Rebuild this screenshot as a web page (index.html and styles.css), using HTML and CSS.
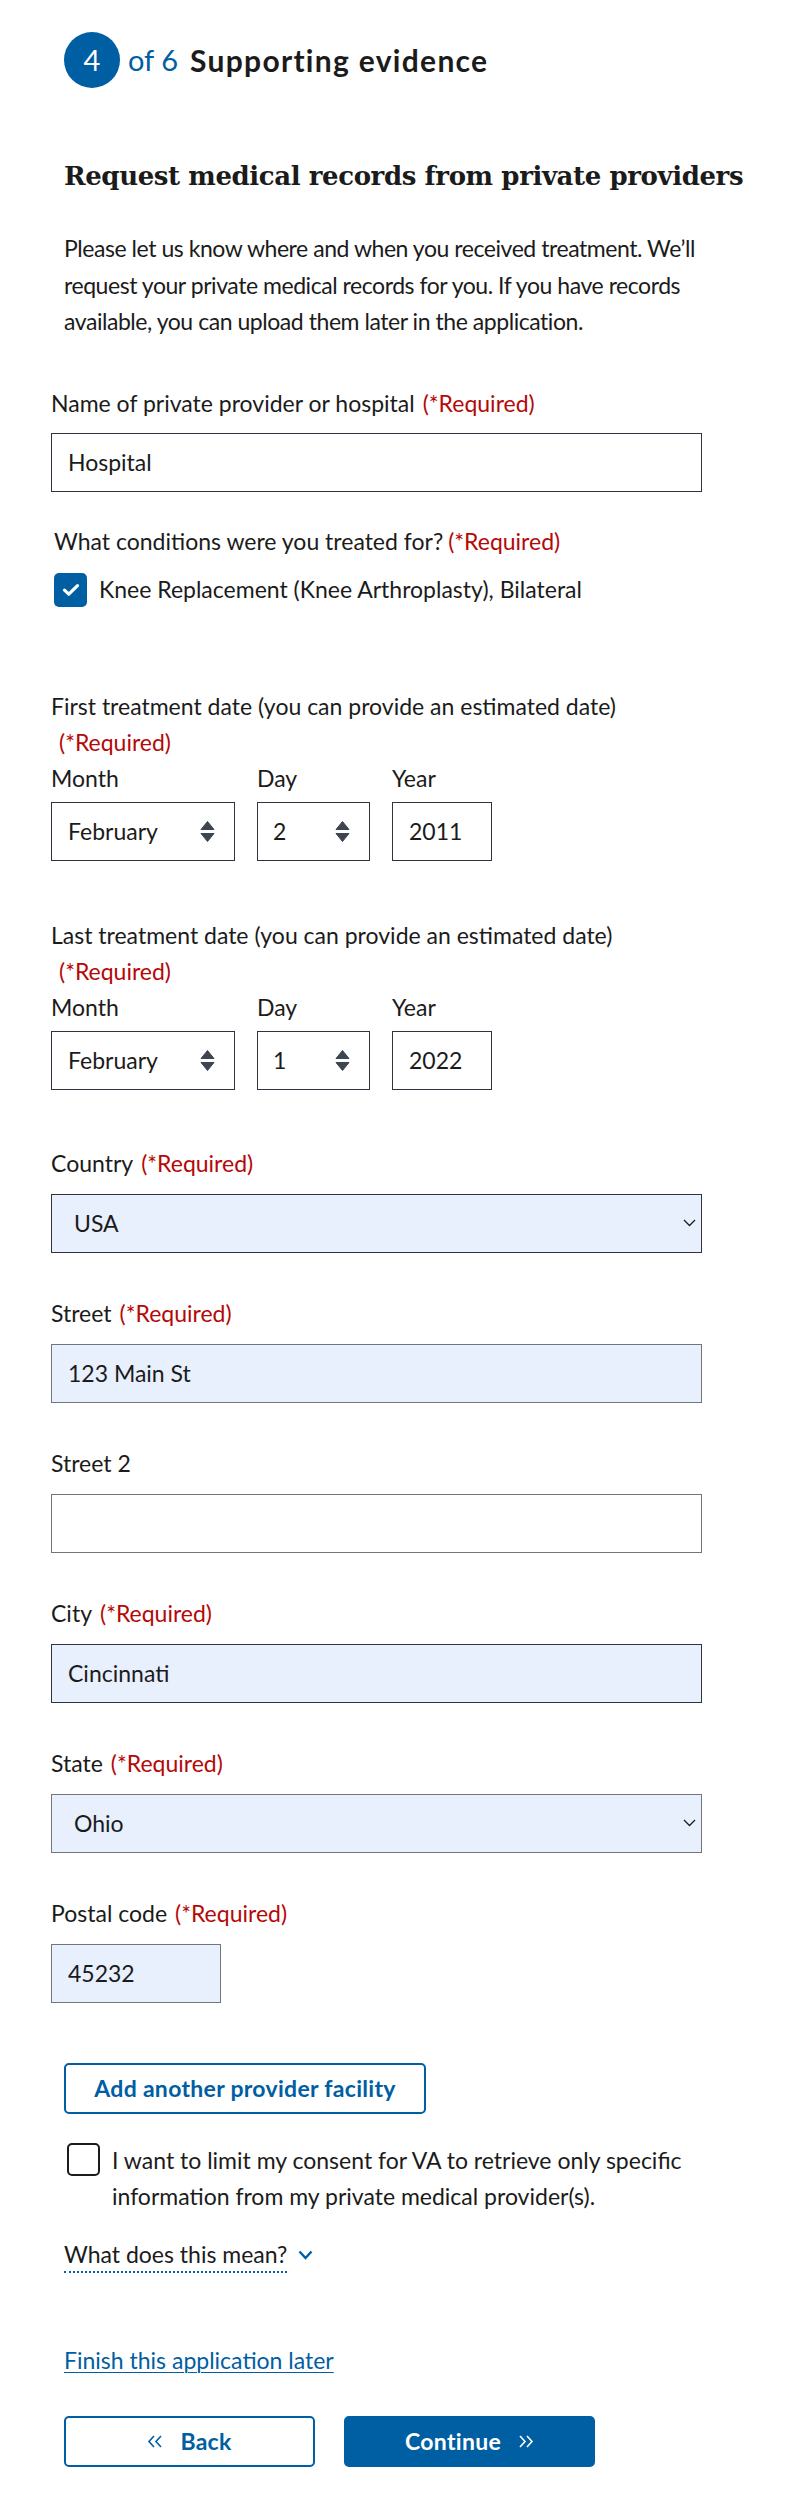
FILE: index.html
```html
<!DOCTYPE html>
<html lang="en">
<head>
<meta charset="utf-8">
<title>Supporting evidence</title>
<link rel="stylesheet" href="styles.css">
</head>
<body>
<main class="page">
  <h1 class="progress">
    <span class="step">4</span>
    <span class="of">of 6</span>
    <span class="title">Supporting evidence</span>
  </h1>

  <h2 class="section-title">Request medical records from private providers</h2>
  <p class="intro">Please let us know where and when you received treatment. We’ll request your private medical records for you. If you have records available, you can upload them later in the application.</p>

  <form class="fields">
    <div class="field field-name">
      <label class="label" for="provider">Name of private provider or hospital<span class="req">(*Required)</span></label>
      <input class="input" id="provider" type="text" value="Hospital">
    </div>

    <div class="conditions">
      <div class="label">What conditions were you treated for?<span class="req req-tight">(*Required)</span></div>
      <div class="check-row">
        <span class="checkbox checked">
          <svg width="18" height="14" viewBox="0 0 18 14"><path d="M2.5 7.2 L6.8 11.2 L15.5 2.6" fill="none" stroke="#fff" stroke-width="3.2" stroke-linecap="round" stroke-linejoin="round"/></svg>
        </span>
        <span class="check-label">Knee Replacement (Knee Arthroplasty), Bilateral</span>
      </div>
    </div>

    <div class="date-group date-first">
      <div class="label">First treatment date (you can provide an estimated date)<span class="req req-block">(*Required)</span></div>
      <div class="date-row">
        <div class="date-col col-month">
          <div class="sublabel">Month</div>
          <div class="box sel-box"><span>February</span>
            <svg class="sort" width="15" height="21" viewBox="0 0 15 21"><path d="M7.5 0.5 L14 8.5 H1 Z M7.5 20.5 L1 12.5 H14 Z" fill="#3d4551" stroke="#3d4551" stroke-width="1" stroke-linejoin="round"/></svg>
          </div>
        </div>
        <div class="date-col col-day">
          <div class="sublabel">Day</div>
          <div class="box sel-box"><span>2</span>
            <svg class="sort" width="15" height="21" viewBox="0 0 15 21"><path d="M7.5 0.5 L14 8.5 H1 Z M7.5 20.5 L1 12.5 H14 Z" fill="#3d4551" stroke="#3d4551" stroke-width="1" stroke-linejoin="round"/></svg>
          </div>
        </div>
        <div class="date-col col-year">
          <div class="sublabel">Year</div>
          <input class="box year-input" type="text" value="2011">
        </div>
      </div>
    </div>

    <div class="date-group date-last">
      <div class="label">Last treatment date (you can provide an estimated date)<span class="req req-block">(*Required)</span></div>
      <div class="date-row">
        <div class="date-col col-month">
          <div class="sublabel">Month</div>
          <div class="box sel-box"><span>February</span>
            <svg class="sort" width="15" height="21" viewBox="0 0 15 21"><path d="M7.5 0.5 L14 8.5 H1 Z M7.5 20.5 L1 12.5 H14 Z" fill="#3d4551" stroke="#3d4551" stroke-width="1" stroke-linejoin="round"/></svg>
          </div>
        </div>
        <div class="date-col col-day">
          <div class="sublabel">Day</div>
          <div class="box sel-box"><span>1</span>
            <svg class="sort" width="15" height="21" viewBox="0 0 15 21"><path d="M7.5 0.5 L14 8.5 H1 Z M7.5 20.5 L1 12.5 H14 Z" fill="#3d4551" stroke="#3d4551" stroke-width="1" stroke-linejoin="round"/></svg>
          </div>
        </div>
        <div class="date-col col-year">
          <div class="sublabel">Year</div>
          <input class="box year-input" type="text" value="2022">
        </div>
      </div>
    </div>

    <div class="field field-country">
      <div class="label">Country<span class="req">(*Required)</span></div>
      <div class="select autofill"><span>USA</span>
        <svg class="chev" width="13" height="8" viewBox="0 0 13 8"><path d="M1 1 L6.5 6.5 L12 1" fill="none" stroke="#1b1b1b" stroke-width="1.3"/></svg>
      </div>
    </div>

    <div class="field">
      <label class="label" for="street">Street<span class="req">(*Required)</span></label>
      <input class="input autofill light" id="street" type="text" value="123 Main St">
    </div>

    <div class="field">
      <label class="label" for="street2">Street 2</label>
      <input class="input light" id="street2" type="text" value="">
    </div>

    <div class="field">
      <label class="label" for="city">City<span class="req">(*Required)</span></label>
      <input class="input autofill" id="city" type="text" value="Cincinnati">
    </div>

    <div class="field">
      <div class="label">State<span class="req">(*Required)</span></div>
      <div class="select autofill light"><span>Ohio</span>
        <svg class="chev" width="13" height="8" viewBox="0 0 13 8"><path d="M1 1 L6.5 6.5 L12 1" fill="none" stroke="#1b1b1b" stroke-width="1.3"/></svg>
      </div>
    </div>

    <div class="field">
      <label class="label" for="postal">Postal code<span class="req">(*Required)</span></label>
      <input class="input autofill light postal" id="postal" type="text" value="45232">
    </div>
  </form>

  <button class="btn btn-add" type="button">Add another provider facility</button>

  <div class="consent">
    <span class="checkbox empty"></span>
    <span class="consent-label">I want to limit my consent for VA to retrieve only specific information from my private medical provider(s).</span>
  </div>

  <div class="more">
    <span class="more-text">What does this mean?</span>
    <svg class="more-chev" width="15" height="10" viewBox="0 0 15 10"><path d="M1.5 1.5 L7.5 8 L13.5 1.5" fill="none" stroke="#005ea2" stroke-width="2.4"/></svg>
  </div>

  <a class="finish" href="#">Finish this application later</a>

  <div class="nav">
    <button class="btn btn-back" type="button">
      <svg width="16" height="13" viewBox="0 0 16 13"><path d="M7 1 L2 6.5 L7 12 M14 1 L9 6.5 L14 12" fill="none" stroke="#005ea2" stroke-width="1.6"/></svg>
      <span>Back</span>
    </button>
    <button class="btn btn-continue" type="button">
      <span>Continue</span>
      <svg width="16" height="13" viewBox="0 0 16 13"><path d="M2 1 L7 6.5 L2 12 M9 1 L14 6.5 L9 12" fill="none" stroke="#fff" stroke-width="1.6"/></svg>
    </button>
  </div>
</main>
</body>
</html>
```

FILE: styles.css
```css
* { box-sizing: border-box; }

html, body {
  margin: 0;
  padding: 0;
  background: #fff;
}

body {
  font-family: "Lato", "Noto Sans", sans-serif;
  font-size: 23px;
  line-height: 36px;
  color: #1b1b1b;
}

.page {
  width: 800px;
  padding: 32px 0 0 64px;
}

/* progress header */
.progress {
  display: flex;
  align-items: center;
  height: 56px;
  margin: 0;
  font-size: 29px;
  line-height: 56px;
}

.step {
  width: 56px;
  height: 56px;
  border-radius: 50%;
  background: #005ea2;
  color: #fff;
  font-weight: 400;
  display: flex;
  align-items: center;
  justify-content: center;
}

.of {
  margin-left: 8px;
  color: #005ea2;
  font-weight: 400;
}

.title {
  margin-left: 12px;
  font-size: 30px;
  letter-spacing: 1.3px;
  font-weight: 700;
}

.section-title {
  margin: 72px 0 0;
  font-family: "DejaVu Serif", serif;
  font-weight: 700;
  font-size: 26px;
  letter-spacing: -0.4px;
  line-height: 32px;
}

.intro {
  margin: 38px 0 0;
  width: 660px;
  line-height: 36.5px;
  letter-spacing: -0.45px;
}

/* form */
.fields {
  margin: 0 0 0 -13px;
  width: 651px;
}

.label {
  display: block;
  margin: 0;
}

.req {
  display: inline-block;
  margin-left: 8px;
  color: #b50909;
}

.req-tight { margin-left: 5px; }

.req-block { display: block; }

.field { margin-top: 42px; }

.field-name { margin-top: 45px; }

.field-country { margin-top: 55px; }

.input {
  display: block;
  width: 100%;
  height: 59px;
  margin: 13px 0 0;
  padding: 0 16px;
  border: 1px solid #2f3540;
  background: #fff;
  font-family: inherit;
  font-size: 23px;
  color: #1b1b1b;
  outline: none;
}

.field-name .input { margin-top: 12px; }

.light { border-color: #71767a; }

.autofill { background: #e8f0fe; }

.postal { width: 170px; }

.select {
  display: flex;
  align-items: center;
  justify-content: space-between;
  height: 59px;
  margin-top: 13px;
  padding: 0 5px 0 22px;
  border: 1px solid #2f3540;
}

.select.light { border-color: #71767a; }

/* conditions */
.conditions {
  margin: 31px 0 0 3px;
}

.check-row {
  display: flex;
  align-items: flex-start;
  margin-top: 12px;
}

.checkbox {
  flex: none;
  width: 33px;
  height: 34px;
  border-radius: 5px;
  display: flex;
  align-items: center;
  justify-content: center;
}

.checkbox.checked {
  margin-top: 2px;
  background: #005ea2;
}

.check-label { margin-left: 12px; }

/* dates */
.date-group { margin-top: 81px; }

.date-last { margin-top: 56px; }

.date-row {
  display: flex;
  gap: 22px;
}

.sublabel { line-height: 36px; }

.col-month { width: 184px; }
.col-day { width: 113px; }
.col-year { width: 100px; }

.box {
  display: flex;
  align-items: center;
  width: 100%;
  height: 59px;
  margin-top: 6px;
  border: 1px solid #2f3540;
  background: #fff;
  font-family: inherit;
  font-size: 23px;
  color: #1b1b1b;
}

.sel-box {
  justify-content: space-between;
  padding: 0 19px 0 16px;
}

.col-day .sel-box { padding-left: 15px; }

.year-input {
  padding: 0 16px;
  outline: none;
}

/* buttons */
.btn {
  display: flex;
  align-items: center;
  justify-content: center;
  height: 51px;
  border: 2px solid #005ea2;
  border-radius: 5px;
  background: #fff;
  color: #005ea2;
  font-family: inherit;
  font-weight: 700;
  font-size: 23px;
  letter-spacing: 0.3px;
  padding: 0;
  cursor: pointer;
}

.btn-add {
  width: 362px;
  margin-top: 60px;
}

.consent {
  display: flex;
  align-items: flex-start;
  width: 620px;
  margin: 28px 0 0 3px;
}

.checkbox.empty {
  width: 33px;
  height: 33px;
  margin-top: 1px;
  border: 2px solid #1b1b1b;
  border-radius: 5px;
}

.consent-label { margin-left: 12px; }

.more {
  display: flex;
  align-items: center;
  margin-top: 23px;
}

.more-text {
  display: inline-block;
  line-height: 34px;
  border-bottom: 2px dotted #005ea2;
}

.more-chev { margin-left: 11px; }

.finish {
  display: inline-block;
  margin-top: 69px;
  color: #005ea2;
  text-decoration: underline;
  text-underline-offset: 3px;
  text-decoration-thickness: 1px;
}

.nav {
  display: flex;
  gap: 29px;
  margin-top: 38px;
}

.btn-back,
.btn-continue {
  width: 251px;
  gap: 17px;
}

.btn-continue {
  background: #005ea2;
  color: #fff;
}
```
